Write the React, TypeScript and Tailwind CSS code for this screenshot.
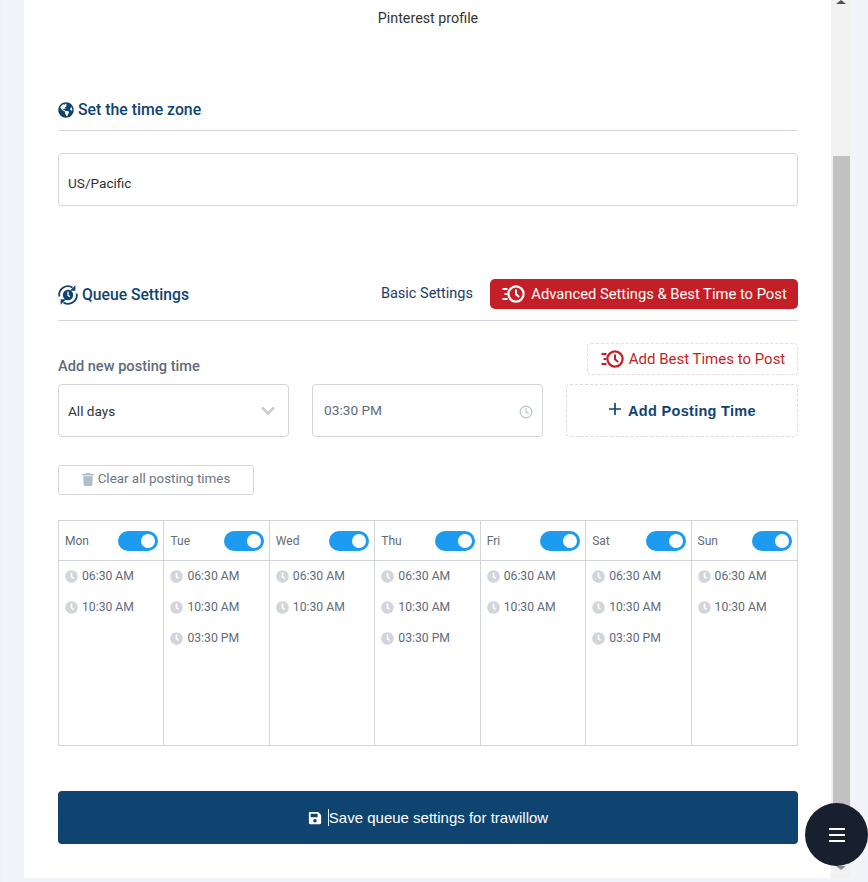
import { FaGlobeAmericas, FaSave, FaTrash, FaClock } from "react-icons/fa";
import { FiClock } from "react-icons/fi";

function FastClock({ className }: { className: string }) {
  return (
    <svg viewBox="0 0 24 20" className={className} fill="none" stroke="currentColor">
      <circle cx="15" cy="10" r="7.6" strokeWidth="2.2" />
      <path d="M15 5.5V10.2L18.2 13" strokeWidth="2" />
      <path d="M1.5 5H6.5M3.5 10H6.5M1.5 15H6.5" strokeWidth="1.8" />
    </svg>
  );
}

function QueueIcon() {
  return (
    <svg viewBox="0 0 20 20" className="mr-[4px] h-[20px] w-[20px] text-[#0f4470]" fill="none" stroke="currentColor">
      <path d="M1.4 11.5A8.6 8.6 0 0 1 14.5 2.6" strokeWidth="1.8" />
      <path d="M18.6 8.5A8.6 8.6 0 0 1 5.5 17.4" strokeWidth="1.8" />
      <path d="M17.4 0.2V5.8H11.8Z" fill="currentColor" stroke="none" />
      <path d="M2.6 19.8V14.2H8.2Z" fill="currentColor" stroke="none" />
      <circle cx="10" cy="10" r="5.2" fill="currentColor" stroke="none" />
      <path d="M10 6.8V10.3L12 11.8" stroke="#fff" strokeWidth="1.3" />
    </svg>
  );
}

const days = [
  { name: "Mon", times: ["06:30 AM", "10:30 AM"] },
  { name: "Tue", times: ["06:30 AM", "10:30 AM", "03:30 PM"] },
  { name: "Wed", times: ["06:30 AM", "10:30 AM"] },
  { name: "Thu", times: ["06:30 AM", "10:30 AM", "03:30 PM"] },
  { name: "Fri", times: ["06:30 AM", "10:30 AM"] },
  { name: "Sat", times: ["06:30 AM", "10:30 AM", "03:30 PM"] },
  { name: "Sun", times: ["06:30 AM", "10:30 AM"] },
];

function DayColumn({ day, last }: { day: (typeof days)[number]; last: boolean }) {
  return (
    <div className={last ? "min-w-0" : "min-w-0 border-r border-[#d2d6dc]"}>
      <div className="flex h-[40px] items-center justify-between border-b border-[#d2d6dc] pl-[6px] pr-[5px]">
        <span className="text-[12px] text-[#5f6b7a]">{day.name}</span>
        <span className="flex h-[20px] w-[40px] items-center justify-end rounded-full bg-[#1d9bf0] pr-[3px]">
          <span className="h-[14px] w-[14px] rounded-full bg-white" />
        </span>
      </div>
      <div className="flex flex-col gap-[11px] pl-[6px] pt-[5px]">
        {day.times.map((t) => (
          <div key={t} className="flex h-[20px] items-center gap-[4px] text-[12.2px] text-[#5f6b7a]">
            <FaClock className="h-[13px] w-[13px] text-[#d2d6dc]" />
            <span>{t}</span>
          </div>
        ))}
      </div>
    </div>
  );
}

export default function App() {
  return (
    <div className="relative flex h-[882px] w-[868px] overflow-hidden border-l-2 border-[#f0f1f3] bg-[#f3f4f9] font-['Roboto',sans-serif]">
      <div className="w-[22px] shrink-0" />
      <main className="h-[878px] w-[807px] shrink-0 bg-white pl-[34px] pr-[33px]">
        <div className="pt-[8px] text-center text-[14.3px] leading-[20px] text-[#333]">Pinterest profile</div>

        <div className="mt-[71px] flex h-[32px] items-center gap-[4px] border-b border-[#d2d6dc] pb-[10px] text-[#0f4470]">
          <FaGlobeAmericas className="h-[16px] w-[16px]" />
          <span className="text-[15.8px] font-medium">Set the time zone</span>
        </div>

        <div className="mt-[22px] flex h-[53px] items-center rounded-[4px] border border-[#d2d6dc] pl-[9px] pt-[7px] text-[13.6px] text-[#333]">
          US/Pacific
        </div>

        <div className="mt-[73px] flex h-[42px] items-start justify-between border-b border-[#d2d6dc]">
          <div className="flex h-[30px] items-center pt-[1px] text-[#0f4470]">
            <QueueIcon />
            <span className="text-[15.7px] font-medium">Queue Settings</span>
          </div>
          <div className="flex items-center gap-[17px]">
            <span className="text-[14.5px] text-[#1c3d66]">Basic Settings</span>
            <span className="flex h-[30px] w-[308px] items-center justify-center gap-[6px] rounded-[5px] bg-[#c41f26] text-[14.75px] text-white">
              <FastClock className="h-[20px] w-[24px]" />
              Advanced Settings &amp; Best Time to Post
            </span>
          </div>
        </div>

        <div className="mt-[22px] flex h-[32px] items-end justify-between">
          <span className="relative top-[1px] text-[14.6px] font-medium leading-[20px] text-[#5f6b7a]">Add new posting time</span>
          <span className="flex h-[32px] w-[211px] items-center justify-center gap-[5px] rounded-[4px] border border-dashed border-[#f4d6d8] text-[15px] text-[#c41f26]">
            <FastClock className="h-[20px] w-[24px]" />
            Add Best Times to Post
          </span>
        </div>

        <div className="mt-[9px] flex h-[53px] gap-[23px]">
          <div className="flex w-[231px] items-center justify-between rounded-[4px] border border-[#d2d6dc] pl-[9px] pr-[13px] text-[13.6px] text-[#333]">
            <span className="pt-[1px]">All days</span>
            <svg viewBox="0 0 14 9" className="h-[9px] w-[14px] text-[#ccc]" fill="none" stroke="currentColor" strokeWidth="2.6">
              <path d="M1 1.5L7 7.5L13 1.5" />
            </svg>
          </div>
          <div className="flex w-[231px] items-center justify-between rounded-[4px] border border-[#d2d6dc] pl-[11px] pr-[9px] text-[13.7px] text-[#5f6b7a]">
            03:30 PM
            <FiClock className="mt-[3px] h-[14px] w-[14px] text-[#b4c3cd]" />
          </div>
          <div className="flex w-[232px] items-center justify-center gap-[6px] rounded-[4px] border border-dashed border-[#d8dce1] font-['Liberation_Sans',sans-serif] text-[14.5px] font-bold text-[#0f4470]">
            <svg viewBox="0 0 14 14" className="mb-[3px] h-[14px] w-[14px]" fill="none" stroke="currentColor" strokeWidth="1.7">
              <path d="M7 1V13M1 7H13" />
            </svg>
            <span className="relative top-[1px] tracking-[0.3px]">Add Posting Time</span>
          </div>
        </div>

        <div className="mt-[28px] flex h-[30px] w-[196px] items-center justify-center gap-[4px] rounded-[3px] border border-[#d2d6dc] pb-[1px] text-[13.4px] text-[#6b7785]">
          <FaTrash className="h-[13px] w-[12px] text-[#afbec8]" />
          Clear all posting times
        </div>

        <div className="mt-[25px] grid h-[226px] grid-cols-7 border border-[#d2d6dc]">
          {days.map((d, i) => (
            <DayColumn key={d.name} day={d} last={i === days.length - 1} />
          ))}
        </div>

        <div className="mt-[45px] flex h-[53px] items-center justify-center gap-[6px] rounded-[4px] bg-[#0f4470] font-['Liberation_Sans',sans-serif] text-[15px] text-white">
          <FaSave className="h-[14px] w-[14px]" />
          <span className="border-l border-white/90 leading-[17px]">Save queue settings for trawillow</span>
        </div>
      </main>

      <div className="flex h-[878px] w-[20px] shrink-0 flex-col items-center bg-[#f1f1f1]">
        <div className="h-0 w-0 border-x-[5px] border-b-[4px] border-x-transparent border-b-[#505050]" />
        <div className="ml-[1px] mt-[152px] h-[708px] w-[17px] bg-[#c1c1c1]" />
        <div className="mt-[2px] h-0 w-0 border-x-[5px] border-t-[4px] border-x-transparent border-t-[#8a8a8a]" />
      </div>

      <div className="absolute left-[803px] top-[803px] flex h-[63px] w-[63px] flex-col items-center justify-center gap-[4px] rounded-full bg-[#17202e]">
        <span className="h-[2px] w-[16px] bg-white" />
        <span className="h-[2px] w-[16px] bg-white" />
        <span className="h-[2px] w-[16px] bg-white" />
      </div>
    </div>
  );
}
